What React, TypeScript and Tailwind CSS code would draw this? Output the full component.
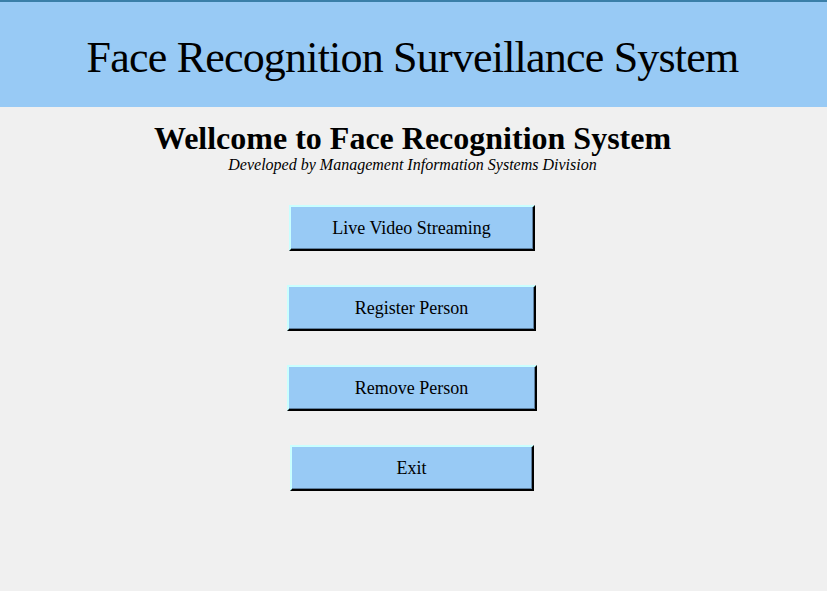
const buttons = [
  { label: 'Live Video Streaming', width: 'w-[246px]' },
  { label: 'Register Person', width: 'w-[249px]' },
  { label: 'Remove Person', width: 'w-[250px]' },
  { label: 'Exit', width: 'w-[244px]' },
];

function RaisedButton({ label, width }: { label: string; width: string }) {
  return (
    <button
      type="button"
      className={`${width} h-[46px] bg-[#98caf5] border-2 border-t-[#c9ffff] border-l-[#c9ffff] border-r-black border-b-black shadow-[inset_-1px_-1px_0_#5d7f9f] text-[18px] text-black font-['Liberation_Serif',serif] flex items-center justify-center`}
    >
      {label}
    </button>
  );
}

export default function App() {
  return (
    <div className="w-[827px] h-[591px] bg-[#f0f0f0] font-['Liberation_Serif',serif] overflow-hidden">
      {/* Header bar */}
      <div className="h-[107px] bg-[#98caf5] border-t-2 border-[#3a7fa8] flex items-center justify-center">
        <h1 className="text-[44px] tracking-[-0.8px] text-black leading-none pt-[6px] pr-[2px]">
          Face Recognition Surveillance System
        </h1>
      </div>

      {/* Welcome text */}
      <div className="flex flex-col items-center pt-[16px] pr-[2px]">
        <h2 className="text-[32px] font-bold leading-[30px] text-black">
          Wellcome to Face Recognition System
        </h2>
        <p className="text-[16px] italic leading-none mt-[4px] text-black">
          Developed by Management Information Systems Division
        </p>
      </div>

      {/* Menu */}
      <div className="flex flex-col items-center gap-[34px] mt-[32px] pr-[4px]">
        {buttons.map((b) => (
          <RaisedButton key={b.label} label={b.label} width={b.width} />
        ))}
      </div>
    </div>
  );
}
